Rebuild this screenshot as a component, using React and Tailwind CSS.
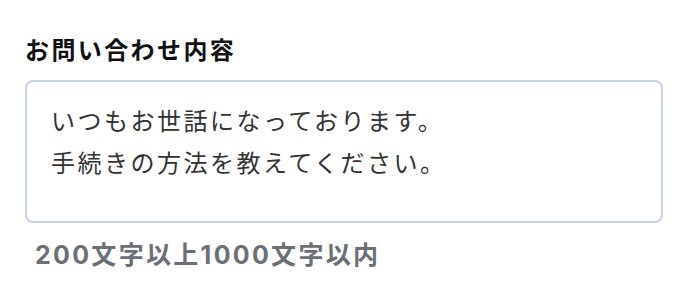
const FONT = { fontFamily: '"Noto Sans CJK JP", "Noto Sans", sans-serif' };
const HINT_FONT = { fontFamily: 'Inter, "Noto Sans CJK JP", sans-serif' };

export default function App() {
  return (
    <div className="w-[688px] h-[308px] bg-white pt-[33px] px-[25px]" style={FONT}>
      <label htmlFor="inquiry" className="block text-[24px] leading-[32px] font-bold tracking-[2.4px] text-[#111]">
        お問い合わせ内容
      </label>
      <textarea
        id="inquiry"
        readOnly
        defaultValue={'いつもお世話になっております。\n手続きの方法を教えてください。'}
        className="mt-[15px] block w-[638px] h-[143px] resize-none rounded-[8px] border-2 border-[#c6d3e2] bg-white pl-[24px] pr-4 pt-[17px] text-[24px] leading-[42px] tracking-[2.5px] text-[#333] outline-none"
      />
      <p className="mt-[15px] pl-[10px] text-[25px] leading-[34px] font-bold tracking-[2.3px] text-[#6b6f76]" style={HINT_FONT}>
        200文字以上1000文字以内
      </p>
    </div>
  );
}
